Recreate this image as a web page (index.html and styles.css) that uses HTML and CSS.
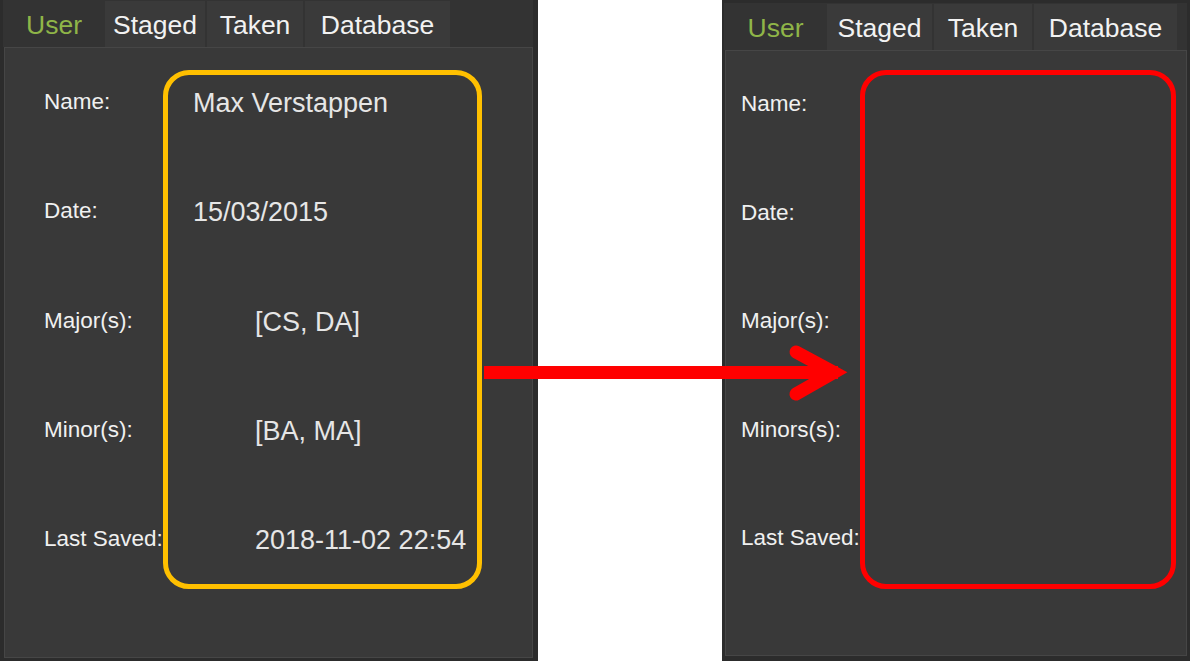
FILE: index.html
```html
<!DOCTYPE html>
<html>
<head>
<meta charset="utf-8">
<link rel="stylesheet" href="styles.css">
</head>
<body>
<div class="stage">
  <section class="panel panel-left">
    <nav class="tabbar">
      <div class="tab active">User</div>
      <div class="tab">Staged</div>
      <div class="tab">Taken</div>
      <div class="tab">Database</div>
    </nav>
    <div class="pane">
      <div class="row"><span class="label">Name:</span><span class="value">Max Verstappen</span></div>
      <div class="row"><span class="label">Date:</span><span class="value">15/03/2015</span></div>
      <div class="row"><span class="label">Major(s):</span><span class="value indent">[CS, DA]</span></div>
      <div class="row"><span class="label">Minor(s):</span><span class="value indent">[BA, MA]</span></div>
      <div class="row"><span class="label">Last Saved:</span><span class="value indent">2018-11-02 22:54</span></div>
    </div>
    <div class="highlight yellow"></div>
  </section>

  <section class="panel panel-right">
    <nav class="tabbar">
      <div class="tab active">User</div>
      <div class="tab">Staged</div>
      <div class="tab">Taken</div>
      <div class="tab">Database</div>
    </nav>
    <div class="pane">
      <div class="row"><span class="label">Name:</span></div>
      <div class="row"><span class="label">Date:</span></div>
      <div class="row"><span class="label">Major(s):</span></div>
      <div class="row"><span class="label">Minors(s):</span></div>
      <div class="row"><span class="label">Last Saved:</span></div>
    </div>
    <div class="highlight red"></div>
  </section>

  <svg class="arrow" width="1190" height="661" viewBox="0 0 1190 661">
    <line x1="484" y1="372.5" x2="838" y2="372.5" stroke="#ff0000" stroke-width="13"/>
    <polyline points="796,352 834,372.5 796,394" fill="none" stroke="#ff0000" stroke-width="13" stroke-linecap="round" stroke-linejoin="miter" stroke-miterlimit="10"/>
  </svg>
</div>
</body>
</html>
```

FILE: styles.css
```css
html, body {
  margin: 0;
  padding: 0;
  background: #ffffff;
}

.stage {
  position: relative;
  width: 1190px;
  height: 661px;
  display: flex;
  justify-content: space-between;
  background: #ffffff;
  font-family: "Liberation Sans", Arial, sans-serif;
  overflow: hidden;
}

.panel {
  position: relative;
  display: flex;
  flex-direction: column;
  background: #2c2c2c;
  box-sizing: border-box;
  height: 661px;
}

.panel-left {
  width: 538px;
  padding: 0 5px 3px 4px;
}

.panel-right {
  width: 468px;
  padding: 3px 3px 5px 3px;
}

.tabbar {
  display: flex;
  height: 47px;
  flex: none;
  background: #333333;
  margin-left: -1px;
  padding-left: 1px;
}

.tab {
  display: flex;
  align-items: center;
  justify-content: center;
  box-sizing: border-box;
  padding-top: 3px;
  margin-top: 1px;
  background: #3a3a3a;
  color: #f2f2f2;
  font-size: 26.5px;
  white-space: nowrap;
}

.tab.active {
  background: #333333;
  color: #8fb548;
}

.panel-left .tab:nth-child(1) { width: 100px; }
.panel-left .tab:nth-child(2) { width: 100px; margin-left: 1px; }
.panel-left .tab:nth-child(3) { width: 96px; margin-left: 2px; }
.panel-left .tab:nth-child(4) { width: 145px; margin-left: 2px; }

.panel-right .tab:nth-child(1) { width: 101px; }
.panel-right .tab:nth-child(2) { width: 105px; margin-left: 1px; }
.panel-right .tab:nth-child(3) { width: 98px; margin-left: 2px; }
.panel-right .tab:nth-child(4) { width: 143px; margin-left: 2px; }

.pane {
  flex: 1;
  background: #393939;
  border: 1px solid #464646;
  display: flex;
  flex-direction: column;
}

.row {
  display: flex;
  align-items: flex-start;
  box-sizing: border-box;
}

.panel-left .pane { padding-left: 39px; }
.panel-left .row { height: 109.25px; padding-top: 40px; }

.panel-right .pane { padding-left: 15px; }
.panel-right .row { height: 108.5px; padding-top: 39px; }

.label {
  width: 149px;
  flex: none;
  padding-top: 1px;
  color: #f0f0f0;
  font-size: 22.5px;
  line-height: 26px;
  white-space: nowrap;
}

.value {
  color: #e6e6e6;
  font-size: 27px;
  line-height: 30px;
  white-space: nowrap;
}

.value.indent {
  padding-left: 62px;
}

.highlight {
  position: absolute;
  top: 70px;
  height: 519px;
  box-sizing: border-box;
  border-width: 5px;
  border-style: solid;
  border-radius: 26px;
}

.highlight.yellow {
  left: 163px;
  width: 319px;
  border-color: #ffc000;
}

.highlight.red {
  left: 138px;
  width: 316px;
  border-color: #ff0000;
}

.arrow {
  position: absolute;
  top: 0;
  left: 0;
  pointer-events: none;
}
```
